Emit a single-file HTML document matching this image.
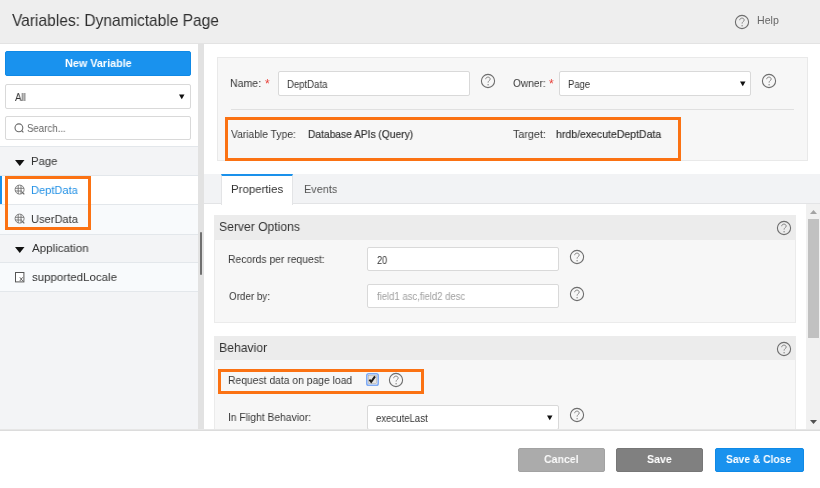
<!DOCTYPE html>
<html><head><meta charset="utf-8"><title>Variables</title>
<style>
*{box-sizing:border-box;margin:0;padding:0}
html,body{width:820px;height:488px;overflow:hidden;background:#fff;font-family:"Liberation Sans",sans-serif;color:#333}
.a{position:absolute}
.t{position:absolute;white-space:pre;will-change:transform;transform-origin:0 0}
.inp{position:absolute;background:#fff;border:1px solid #d9d9d9;border-radius:2px}
.or{position:absolute;border:3px solid #fb7213}
.q{position:absolute;width:16px;height:16px}
.tri{position:absolute}

</style></head>
<body>
<svg width="0" height="0" style="position:absolute">
 <defs>
  <g id="qi">
   <circle cx="8" cy="8" r="6.6" fill="none" stroke="#6e6e6e" stroke-width="1.1"/>
   <path d="M5.7 6.2 C5.7 4.8 6.8 4.1 8 4.1 C9.3 4.1 10.2 5 10.2 6.1 C10.2 7.5 8.1 7.6 8.1 9.6" fill="none" stroke="#858585" stroke-width="1"/>
   <circle cx="8.1" cy="11.7" r="0.7" fill="#858585"/>
  </g>
 </defs>
</svg>
<!-- header -->
<div class="a" style="left:0;top:0;width:820px;height:44px;background:#eeeeee;border-bottom:1px solid #e3e3e3"></div>
<svg class="q" style="left:734px;top:14px"><use href="#qi"/></svg>

<!-- left panel -->
<div class="a" style="left:5px;top:51px;width:186px;height:25px;background:#1992ee;border:1px solid #0f89e6;border-radius:2px"></div>
<div class="inp" style="left:5px;top:84px;width:186px;height:25px"></div>
<svg class="tri" style="left:178px;top:93px" width="8" height="7"><path d="M1 1.5 L6.5 1.5 L3.75 6.2 Z" fill="#111"/></svg>
<div class="inp" style="left:5px;top:116px;width:186px;height:24px"></div>
<svg class="a" style="left:13.4px;top:121.5px" width="12" height="12"><circle cx="5.9" cy="5.8" r="3.9" fill="none" stroke="#6a6a6a" stroke-width="1.1"/><path d="M8.7 8.6 L10.4 10.4" stroke="#6a6a6a" stroke-width="1.2"/></svg>

<div class="a" style="left:0;top:147px;width:198px;height:283px;background:#f3f4f6"></div>
<div class="a" style="left:0;top:146px;width:198px;height:1px;background:#e3e7eb"></div>
<div class="a" style="left:0;top:175px;width:198px;height:29px;background:#ffffff;border-top:1px solid #e3e7eb"></div>
<div class="a" style="left:0;top:204px;width:198px;height:30px;background:#f8fafc;border-top:1px solid #e3e7eb"></div>
<div class="a" style="left:0;top:234px;width:198px;height:1px;background:#e3e7eb"></div>
<div class="a" style="left:0;top:262px;width:198px;height:30px;background:#f8fafc;border-top:1px solid #e3e7eb;border-bottom:1px solid #e3e7eb"></div>
<div class="a" style="left:0;top:176px;width:2px;height:28px;background:#1a91eb"></div>
<svg class="tri" style="left:15px;top:159px" width="10" height="8"><path d="M0 1 L9.5 1 L4.75 7 Z" fill="#111"/></svg>
<svg class="tri" style="left:15px;top:246px" width="10" height="8"><path d="M0 1 L9.5 1 L4.75 7 Z" fill="#111"/></svg>
<svg class="a" style="left:14px;top:184px" width="12" height="12"><g fill="none" stroke="#6a6a6a" stroke-width="0.85"><circle cx="5.6" cy="5.6" r="4.5"/><path d="M4.2 1.3 V9.9 M7 1.3 V9.9 M1.2 4.3 H10 M1.2 7 H8"/><path d="M7.6 7.6 L10.3 10.4" stroke-width="1.3"/></g></svg>
<svg class="a" style="left:14px;top:213px" width="12" height="12"><g fill="none" stroke="#6a6a6a" stroke-width="0.85"><circle cx="5.6" cy="5.6" r="4.5"/><path d="M4.2 1.3 V9.9 M7 1.3 V9.9 M1.2 4.3 H10 M1.2 7 H8"/><path d="M7.6 7.6 L10.3 10.4" stroke-width="1.3"/></g></svg>
<svg class="a" style="left:14px;top:271px" width="11" height="12"><rect x="1.5" y="1.5" width="8.4" height="9.4" fill="#fff" stroke="#555" stroke-width="1"/><path d="M5.8 6.3 L8.8 10 M8.6 6.3 L5.8 10" stroke="#555" stroke-width="0.9"/></svg>
<div class="or" style="left:5px;top:176px;width:86px;height:54px"></div>

<!-- splitter -->
<div class="a" style="left:198px;top:44px;width:6px;height:386px;background:#e2e2e2"></div>
<div class="a" style="left:200px;top:232px;width:2px;height:43px;background:#707070;border-radius:1px"></div>

<!-- top box -->
<div class="a" style="left:217px;top:57px;width:591px;height:104px;background:#f7f7f7;border:1px solid #e9e9e9"></div>
<div class="t" style="left:265.1px;top:78px;font-size:12px;line-height:12px;color:#e8413a">*</div>
<div class="t" style="left:548.9px;top:78px;font-size:12px;line-height:12px;color:#e8413a">*</div>
<div class="inp" style="left:278px;top:71px;width:192px;height:25px"></div>
<svg class="q" style="left:480px;top:73px"><use href="#qi"/></svg>
<div class="inp" style="left:559px;top:71px;width:192px;height:25px"></div>
<svg class="tri" style="left:739px;top:80px" width="8" height="7"><path d="M1 1.5 L6.5 1.5 L3.75 6.2 Z" fill="#111"/></svg>
<svg class="q" style="left:761px;top:73px"><use href="#qi"/></svg>
<div class="a" style="left:231px;top:109px;width:563px;height:1px;background:#e0e0e0"></div>
<div class="or" style="left:225px;top:117px;width:456px;height:44px"></div>

<!-- tabs -->
<div class="a" style="left:204px;top:174px;width:616px;height:30px;background:#f2f3f5;border-bottom:1px solid #e3e4e6"></div>
<div class="a" style="left:221px;top:174px;width:72px;height:31px;background:#fff;border-top:2px solid #1a91eb;border-left:1px solid #e3e4e6;border-right:1px solid #e3e4e6"></div>

<!-- scrollbar -->
<div class="a" style="left:806px;top:204px;width:14px;height:226px;background:#f1f1f1"></div>
<svg class="a" style="left:808px;top:208px" width="11" height="8"><path d="M2 6 L9 6 L5.5 2 Z" fill="#a3a3a3"/></svg>
<div class="a" style="left:808px;top:219px;width:11px;height:119px;background:#c1c1c1"></div>
<svg class="a" style="left:808px;top:418px" width="11" height="8"><path d="M2 2 L9 2 L5.5 6 Z" fill="#505050"/></svg>

<!-- server options -->
<div class="a" style="left:214px;top:215px;width:582px;height:108px;background:#f7f7f7;border:1px solid #ebebeb"></div>
<div class="a" style="left:214px;top:215px;width:582px;height:25px;background:#ececec"></div>
<svg class="q" style="left:775.5px;top:220px"><use href="#qi"/></svg>
<div class="inp" style="left:367px;top:247px;width:192px;height:24px"></div>
<svg class="q" style="left:569px;top:249px"><use href="#qi"/></svg>
<div class="inp" style="left:367px;top:284px;width:192px;height:24px"></div>
<svg class="q" style="left:569px;top:286px"><use href="#qi"/></svg>

<!-- behavior -->
<div class="a" style="left:214px;top:336px;width:582px;height:100px;background:#f7f7f7;border:1px solid #ebebeb"></div>
<div class="a" style="left:214px;top:336px;width:582px;height:24px;background:#ececec"></div>
<svg class="q" style="left:775.5px;top:341px"><use href="#qi"/></svg>
<div class="or" style="left:218px;top:369px;width:206px;height:25px"></div>
<svg class="a" style="left:366px;top:373px" width="13" height="13"><rect x="0.8" y="0.8" width="11.4" height="11.4" rx="1.8" fill="none" stroke="#7eaaf4" stroke-width="1.6"/><rect x="2.4" y="2.4" width="8.2" height="8.2" fill="#e4e4e4" stroke="#a0a0a0" stroke-width="0.5"/><path d="M3.4 6.6 L5.2 8.8 L9 3.4" fill="none" stroke="#1e1e1e" stroke-width="2"/></svg>
<svg class="q" style="left:388px;top:372px"><use href="#qi"/></svg>
<div class="inp" style="left:367px;top:405px;width:192px;height:25px"></div>
<svg class="tri" style="left:546px;top:414px" width="8" height="7"><path d="M1 1.5 L6.5 1.5 L3.75 6.2 Z" fill="#111"/></svg>
<svg class="q" style="left:569px;top:407px"><use href="#qi"/></svg>

<!-- footer -->
<div class="a" style="left:0;top:429px;width:820px;height:59px;background:#fff;border-top:1px solid #e6e6e6"></div>
<div class="a" style="left:0;top:430px;width:820px;height:1px;background:#dcdcdc"></div>
<div class="a" style="left:518px;top:448px;width:87px;height:24px;background:#ababab;border:1px solid #a2a2a2;border-radius:2px"></div>
<div class="a" style="left:616px;top:448px;width:87px;height:24px;background:#808080;border:1px solid #777;border-radius:2px"></div>
<div class="a" style="left:715px;top:448px;width:89px;height:24px;background:#1992ee;border:1px solid #0f89e6;border-radius:2px"></div>

<div class="t" style="left:12.00px;top:13.15px;font-size:16.6px;line-height:16.6px;letter-spacing:0.000px;color:#2e2e2e;transform:scaleX(0.9364);">Variables: Dynamictable Page</div>
<div class="t" style="left:757.00px;top:14.93px;font-size:10.6px;line-height:10.6px;letter-spacing:0.000px;color:#666;">Help</div>
<div class="t" style="left:64.90px;top:57.80px;font-size:11.1px;line-height:11.1px;letter-spacing:0.000px;color:#fff;font-weight:bold;transform:scaleX(0.9735);">New Variable</div>
<div class="t" style="left:14.90px;top:92.67px;font-size:10.2px;line-height:10.2px;letter-spacing:0.000px;color:#333;transform:scaleX(0.9455);">All</div>
<div class="t" style="left:27.06px;top:123.98px;font-size:10.3px;line-height:10.3px;letter-spacing:0.000px;color:#666;transform:scaleX(0.9385);">Search...</div>
<div class="t" style="left:30.93px;top:155.40px;font-size:11.7px;line-height:11.7px;letter-spacing:0.000px;color:#333;transform:scaleX(0.9692);">Page</div>
<div class="t" style="left:30.96px;top:184.30px;font-size:11.7px;line-height:11.7px;letter-spacing:0.000px;color:#1f8fe5;transform:scaleX(0.9449);">DeptData</div>
<div class="t" style="left:30.85px;top:212.50px;font-size:11.7px;line-height:11.7px;letter-spacing:0.000px;color:#333;transform:scaleX(0.9521);">UserData</div>
<div class="t" style="left:31.80px;top:241.70px;font-size:11.7px;line-height:11.7px;letter-spacing:0.000px;color:#333;transform:scaleX(0.9895);">Application</div>
<div class="t" style="left:31.80px;top:271.30px;font-size:11.7px;line-height:11.7px;letter-spacing:0.000px;color:#333;transform:scaleX(0.9826);">supportedLocale</div>
<div class="t" style="left:230.47px;top:77.53px;font-size:11.3px;line-height:11.3px;letter-spacing:0.000px;color:#383838;transform:scaleX(0.9344);">Name:</div>
<div class="t" style="left:286.64px;top:80.03px;font-size:10.0px;line-height:10.0px;letter-spacing:0.000px;color:#333;transform:scaleX(0.9561);">DeptData</div>
<div class="t" style="left:512.60px;top:77.73px;font-size:11.3px;line-height:11.3px;letter-spacing:0.000px;color:#383838;transform:scaleX(0.8972);">Owner:</div>
<div class="t" style="left:568.35px;top:79.53px;font-size:10.0px;line-height:10.0px;letter-spacing:0.000px;color:#333;transform:scaleX(0.9455);">Page</div>
<div class="t" style="left:231.30px;top:128.52px;font-size:11.2px;line-height:11.2px;letter-spacing:0.000px;color:#383838;transform:scaleX(0.9200);">Variable Type:</div>
<div class="t" style="left:308.00px;top:128.82px;font-size:11.2px;line-height:11.2px;letter-spacing:0.000px;color:#333;-webkit-text-stroke:0.2px #333;transform:scaleX(0.9139);">Database APIs (Query)</div>
<div class="t" style="left:512.80px;top:128.72px;font-size:11.2px;line-height:11.2px;letter-spacing:0.000px;color:#383838;transform:scaleX(0.9606);">Target:</div>
<div class="t" style="left:555.70px;top:128.82px;font-size:11.2px;line-height:11.2px;letter-spacing:0.000px;color:#333;-webkit-text-stroke:0.2px #333;transform:scaleX(0.9393);">hrdb/executeDeptData</div>
<div class="t" style="left:230.62px;top:183.20px;font-size:11.7px;line-height:11.7px;letter-spacing:0.000px;color:#333;transform:scaleX(0.9788);">Properties</div>
<div class="t" style="left:303.57px;top:183.20px;font-size:11.7px;line-height:11.7px;letter-spacing:0.000px;color:#555;transform:scaleX(0.9286);">Events</div>
<div class="t" style="left:218.67px;top:219.70px;font-size:13.0px;line-height:13.0px;letter-spacing:0.000px;color:#333;transform:scaleX(0.9329);">Server Options</div>
<div class="t" style="left:227.87px;top:254.00px;font-size:11.1px;line-height:11.1px;letter-spacing:0.000px;color:#383838;transform:scaleX(0.9333);">Records per request:</div>
<div class="t" style="left:376.70px;top:255.84px;font-size:10.0px;line-height:10.0px;letter-spacing:0.000px;color:#333;transform:scaleX(0.9182);">20</div>
<div class="t" style="left:228.70px;top:290.90px;font-size:11.1px;line-height:11.1px;letter-spacing:0.000px;color:#383838;transform:scaleX(0.8870);">Order by:</div>
<div class="t" style="left:376.70px;top:291.54px;font-size:10.0px;line-height:10.0px;letter-spacing:0.000px;color:#a0a0a0;transform:scaleX(0.9505);">field1 asc,field2 desc</div>
<div class="t" style="left:218.96px;top:340.80px;font-size:13.0px;line-height:13.0px;letter-spacing:0.000px;color:#333;transform:scaleX(0.9380);">Behavior</div>
<div class="t" style="left:228.07px;top:374.60px;font-size:11.1px;line-height:11.1px;letter-spacing:0.000px;color:#383838;transform:scaleX(0.9318);">Request data on page load</div>
<div class="t" style="left:227.87px;top:412.00px;font-size:11.1px;line-height:11.1px;letter-spacing:0.000px;color:#383838;transform:scaleX(0.9284);">In Flight Behavior:</div>
<div class="t" style="left:376.40px;top:413.84px;font-size:10.0px;line-height:10.0px;letter-spacing:0.000px;color:#333;transform:scaleX(0.9574);">executeLast</div>
<div class="t" style="left:544.00px;top:453.87px;font-size:11.5px;line-height:11.5px;letter-spacing:0.000px;color:#fafafa;font-weight:bold;transform:scaleX(0.9189);">Cancel</div>
<div class="t" style="left:647.00px;top:453.87px;font-size:11.5px;line-height:11.5px;letter-spacing:0.000px;color:#fff;font-weight:bold;transform:scaleX(0.9222);">Save</div>
<div class="t" style="left:726.20px;top:453.77px;font-size:11.5px;line-height:11.5px;letter-spacing:0.000px;color:#fff;font-weight:bold;transform:scaleX(0.8945);">Save &amp; Close</div>
</body></html>
